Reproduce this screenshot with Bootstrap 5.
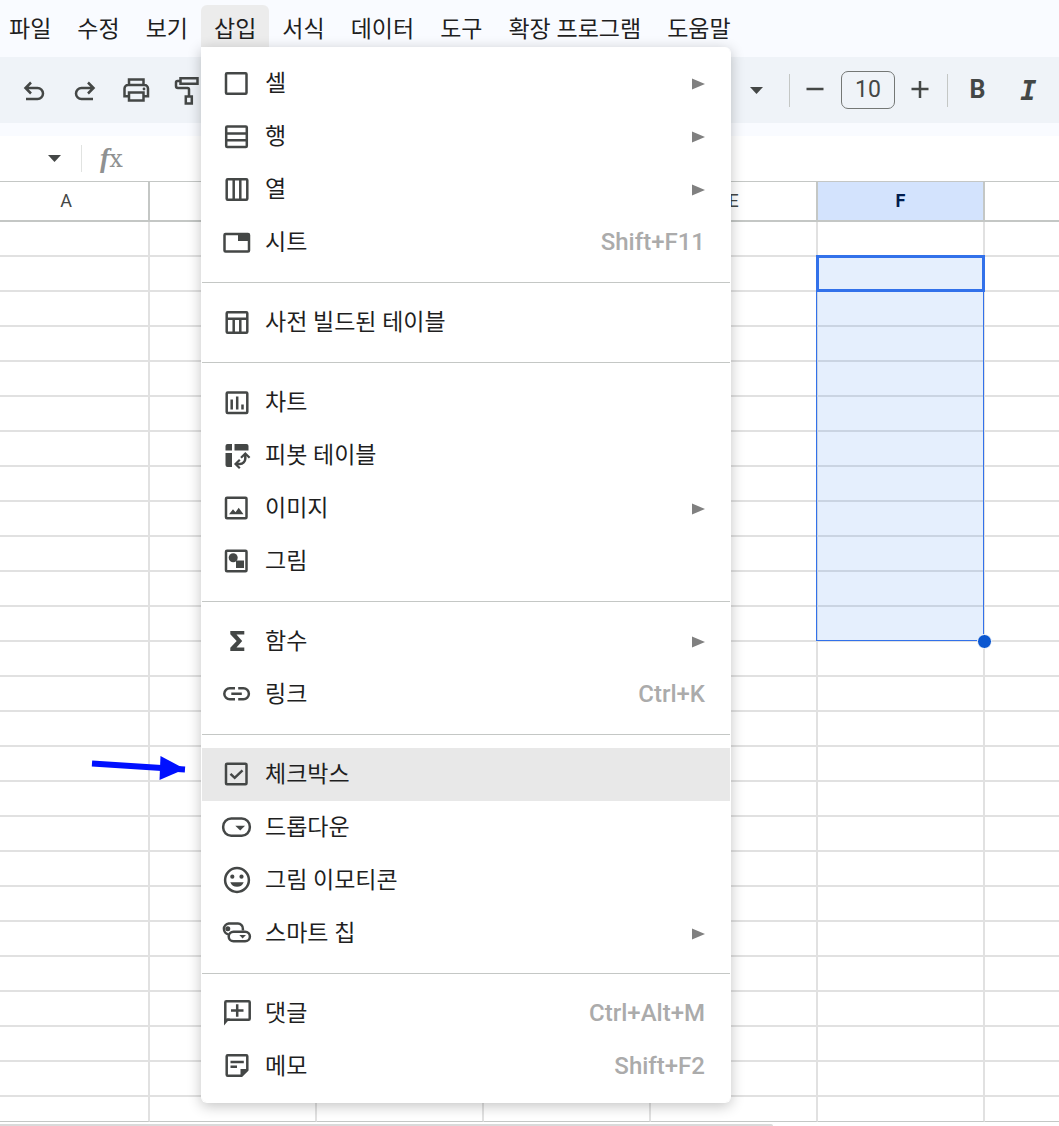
<!DOCTYPE html>
<html lang="ko">
<head>
<meta charset="utf-8">
<meta name="viewport" content="width=device-width, initial-scale=1">
<title>스프레드시트</title>
<link href="https://cdn.jsdelivr.net/npm/bootstrap@5.3.0/dist/css/bootstrap.min.css" rel="stylesheet">
<style>
  :root { --ink: #444746; --line: #c4c7c5; --grid: #e1e1e1; --blue: #3271ea; }
  body { font-family: Roboto, "Noto Sans CJK KR", sans-serif; color: #1f1f1f; background: #fff; overflow-x: hidden; }
  svg { display: block; flex: none; }
  .ico { fill: none; stroke: var(--ink); stroke-width: 2.5; }
  .ico .solid { fill: var(--ink); stroke: none; }

  .menubar { background: #f9fbff; height: 57px; padding-top: 5px; }
  .menubar-list { margin-left: -4px; }
  .menubar-btn { height: 42px; padding: 8px 13px 0; border: 0; background: none; font-size: 23px; line-height: 34px; color: #1f1f1f; white-space: nowrap; border-radius: 6px 6px 0 0; }
  .menubar-btn.active { background: #ececec; }

  .insert-menu { top: 100%; left: 0; width: 530px; padding: 10px 0 9px; margin: 0; border: 1px solid #fff; border-top: 0; border-radius: 0 6px 6px 6px; box-shadow: 0 3px 14px rgba(0,0,0,.24); }
  .insert-menu .dropdown-item { height: 53px; padding: 0 25px 0 19px; font-size: 23px; line-height: 53px; color: #1f1f1f; }
  .insert-menu .dropdown-item.active { background: #e8e8e8; }
  .insert-menu .dropdown-divider { margin: 13px 0; border-top: 1px solid var(--line); opacity: 1; }
  .entry-label { margin-left: 12px; }
  .shortcut { color: #ababab; font-size: 24px; font-weight: 500; }
  .more { fill: #808080; }

  .toolbar { background: #eff3f8; height: 66px; padding-left: 8px; }
  .tools-left { width: 732px; }
  .tool { width: 51px; height: 50px; padding: 0; border: 0; background: none; color: var(--ink); display: flex; align-items: center; justify-content: center; flex: none; }
  .tool-sm { width: 33px; }
  .rule { width: 1px; height: 33px; background: var(--line); flex: none; }
  .rule-end { margin: 0 4px 0 11px; }
  .size-box { width: 54px; height: 38px; margin: 0 8px 0 10px; border: 1px solid #747775; border-radius: 7px; background: none; font-size: 23px; line-height: 34px; color: var(--ink); text-align: center; padding: 0 0 2px; }
  .glyph-b { font-size: 25px; font-weight: 700; }
  .glyph-i { font: italic 700 27px "DejaVu Sans Mono", monospace; }

  .formula-bar { border-top: 13px solid #f9fbff; height: 58px; }
  .name-arrow { width: 81px; height: 44px; padding: 0 20px 0 0; border: 0; background: none; display: flex; justify-content: flex-end; align-items: center; }
  .rule-pale { height: 27px; background: #e1e3e1; }
  .fx-mark { margin-left: 18px; font: 24px/44px "DejaVu Serif", serif; color: #8f9191; }
  .fx-mark i { font-family: "Liberation Serif", serif; font-size: 28px; font-weight: 700; }

  .sheet { table-layout: fixed; width: 100%; border-collapse: separate; border-spacing: 0; border-top: 1px solid var(--line); }
  .sheet th { height: 40px; padding: 0; border-right: 2px solid var(--line); border-bottom: 2px solid var(--line); font-size: 18px; font-weight: 400; line-height: 38px; text-align: center; color: var(--ink); }
  .sheet th:first-child { padding-right: 16px; }
  .sheet th.picked { background: #d3e3fd; color: #001d4f; font-weight: 700; }
  .sheet td { height: 35px; padding: 0; border-right: 2px solid var(--grid); border-bottom: 2px solid var(--grid); }
  .sheet tr > :last-child { border-right: 0; }
  .sheet tr.cut td { height: 25px; border-bottom: 1px solid var(--line); }
  .col-first { width: 150px; }
  .col-std { width: 167px; }

  .anchor-cell { position: relative; }
  .range { position: absolute; top: -2px; left: -2px; right: -1px; height: 386px; border: 1px solid var(--blue); background: rgba(14,101,235,.105); }
  .active-cell { position: absolute; top: -1px; left: -1px; right: -2px; height: 37px; border: 3px solid var(--blue); }
  .handle { position: absolute; right: -9px; bottom: -9px; width: 15px; height: 15px; border: 1px solid #fff; border-radius: 50%; background: #0b57d0; }

  .scroll-track { height: 4px; padding-top: 2px; overflow: hidden; }
  .scroll-thumb { width: 73%; height: 2px; background: #dadada; border-radius: 0 2px 0 0; }
  .pointer-note { position: absolute; left: 88px; top: 752px; z-index: 1100; pointer-events: none; }
</style>
<script src="https://cdn.jsdelivr.net/npm/bootstrap@5.3.0/dist/js/bootstrap.bundle.min.js"></script>
</head>
<body>
<nav class="menubar">
  <ul class="menubar-list list-unstyled d-flex mb-0">
    <li><button type="button" class="menubar-btn">파일</button></li>
    <li><button type="button" class="menubar-btn">수정</button></li>
    <li><button type="button" class="menubar-btn">보기</button></li>
    <li class="dropdown">
      <button type="button" class="menubar-btn active" aria-expanded="true">삽입</button>
      <ul class="dropdown-menu insert-menu show">
        <li><a href="#" class="dropdown-item d-flex align-items-center">
          <svg class="ico" width="32" height="33"><rect x="5" y="6.2" width="20.5" height="20.6" rx="1"/></svg>
          <span class="entry-label">셀</span>
          <svg class="more ms-auto" width="13" height="12"><path d="M0 .5 13 6 0 11.500z"/></svg></a></li>
        <li><a href="#" class="dropdown-item d-flex align-items-center">
          <svg class="ico" width="32" height="33"><path d="M6.200 6.500h18.600a1 1 0 0 1 1 1v18.600a1 1 0 0 1-1 1H6.200a1 1 0 0 1-1-1V7.500a1 1 0 0 1 1-1zM5.200 13.500h20.600M5.200 20.300h20.600"/></svg>
          <span class="entry-label">행</span>
          <svg class="more ms-auto" width="13" height="12"><path d="M0 .5 13 6 0 11.500z"/></svg></a></li>
        <li><a href="#" class="dropdown-item d-flex align-items-center">
          <svg class="ico" width="32" height="33"><rect x="5.700" y="6.200" width="20.600" height="20.600" rx="1"/><path d="M12.700 6v21M19.300 6v21"/></svg>
          <span class="entry-label">열</span>
          <svg class="more ms-auto" width="13" height="12"><path d="M0 .5 13 6 0 11.500z"/></svg></a></li>
        <li><a href="#" class="dropdown-item d-flex align-items-center">
          <svg class="ico" width="32" height="33"><rect x="3.500" y="8" width="24.500" height="17.500" rx="1"/><path class="solid" d="M17 7h11v8H17z"/></svg>
          <span class="entry-label">시트</span><span class="shortcut ms-auto">Shift+F11</span></a></li>
        <li><hr class="dropdown-divider"></li>
        <li><a href="#" class="dropdown-item d-flex align-items-center">
          <svg class="ico" width="32" height="33"><rect x="5.700" y="6.200" width="20.600" height="20.600" rx="1"/><path d="M5.700 12.800h20.600M12.700 13v14M19.300 13v14"/></svg>
          <span class="entry-label">사전 빌드된 테이블</span></a></li>
        <li><hr class="dropdown-divider"></li>
        <li><a href="#" class="dropdown-item d-flex align-items-center">
          <svg class="ico" width="32" height="33"><rect x="5.700" y="6.500" width="20.600" height="20.600" rx="1"/><path d="M10.700 13.500v10M16.200 10.500v13M21.500 18.500v5"/></svg>
          <span class="entry-label">차트</span></a></li>
        <li><a href="#" class="dropdown-item d-flex align-items-center">
          <svg class="ico" width="32" height="33"><path class="solid" d="M6.500 5H11v6.500H4.500V7a2 2 0 0 1 2-2zM13.500 5h12a2 2 0 0 1 2 2v4.500h-14zM4.500 14H11v14H6.500a2 2 0 0 1-2-2z"/><path d="M24.300 15v4.500a5.500 5.500 0 0 1-5.500 5.500H15"/><path d="M20 18.800 24.300 14.500l4.300 4.300M18.800 20.700 14.500 25l4.300 4.300" stroke-width="2.200"/></svg>
          <span class="entry-label">피봇 테이블</span></a></li>
        <li><a href="#" class="dropdown-item d-flex align-items-center">
          <svg class="ico" width="32" height="33"><rect x="5" y="5.700" width="20.500" height="20.600" rx="1"/><path class="solid" d="m8 22.300 4-5 2.500 3 3.200-4.500 4.800 6.500z"/></svg>
          <span class="entry-label">이미지</span>
          <svg class="more ms-auto" width="13" height="12"><path d="M0 .5 13 6 0 11.500z"/></svg></a></li>
        <li><a href="#" class="dropdown-item d-flex align-items-center">
          <svg class="ico" width="32" height="33"><rect x="5" y="5.700" width="20.500" height="20.600" rx="1"/><circle class="solid" cx="12.200" cy="12.700" r="4.500"/><path class="solid" d="M15 15.500h8V23h-8z"/></svg>
          <span class="entry-label">그림</span></a></li>
        <li><hr class="dropdown-divider"></li>
        <li><a href="#" class="dropdown-item d-flex align-items-center">
          <svg class="ico" width="32" height="33"><path class="solid" d="M9.300 6h14v3.600h-7.800l5.700 6.400-5.700 6.400h7.800V26h-14v-3.200l6.400-6.800-6.400-6.800z"/></svg>
          <span class="entry-label">함수</span>
          <svg class="more ms-auto" width="13" height="12"><path d="M0 .5 13 6 0 11.500z"/></svg></a></li>
        <li><a href="#" class="dropdown-item d-flex align-items-center">
          <svg class="ico" width="32" height="33"><path d="M14 10.200H8.800a5.500 5.500 0 0 0 0 11H14M17.200 10.200h5.200a5.500 5.500 0 0 1 0 11h-5.200M10.300 15.700h10.500"/></svg>
          <span class="entry-label">링크</span><span class="shortcut ms-auto">Ctrl+K</span></a></li>
        <li><hr class="dropdown-divider"></li>
        <li><a href="#" class="dropdown-item active d-flex align-items-center">
          <svg class="ico" width="32" height="33"><rect x="5" y="5.700" width="20.500" height="20.600" rx="1"/><path d="m9.500 15.800 4.200 4 7.800-7.500"/></svg>
          <span class="entry-label">체크박스</span></a></li>
        <li><a href="#" class="dropdown-item d-flex align-items-center">
          <svg class="ico" width="32" height="33"><rect x="2.200" y="7.500" width="26.600" height="17.200" rx="8"/><path class="solid" d="M14.300 14.700h9.800l-4.900 4.800z"/></svg>
          <span class="entry-label">드롭다운</span></a></li>
        <li><a href="#" class="dropdown-item d-flex align-items-center">
          <svg class="ico" width="32" height="33"><circle cx="16" cy="16" r="11.900"/><g class="solid"><circle cx="11.300" cy="12.700" r="2.100"/><circle cx="20.500" cy="12.700" r="2.100"/><path d="M9.300 18.300h13.400a7.200 7.200 0 0 1-13.400 0z"/></g></svg>
          <span class="entry-label">그림 이모티콘</span></a></li>
        <li><a href="#" class="dropdown-item d-flex align-items-center">
          <svg class="ico" width="32" height="33"><path d="M7.500 17.300a5.400 5.400 0 0 1 .2-10.700h9a5 5 0 0 1 5.200 5.400v1.500"/><rect x="7.700" y="14.700" width="21.200" height="9.600" rx="4.800"/><circle class="solid" cx="6.800" cy="11.700" r="2.500"/><path class="solid" d="M18.300 18h6.700l-3.400 3.400z"/></svg>
          <span class="entry-label">스마트 칩</span>
          <svg class="more ms-auto" width="13" height="12"><path d="M0 .5 13 6 0 11.500z"/></svg></a></li>
        <li><hr class="dropdown-divider"></li>
        <li><a href="#" class="dropdown-item d-flex align-items-center">
          <svg class="ico" width="32" height="33"><path d="M4.300 25V5.300a1 1 0 0 1 1-1h22.400a1 1 0 0 1 1 1v16.500a1 1 0 0 1-1 1H6"/><path class="solid" d="M3 21.500h6L3 28.500z"/><path d="M10 13.500h12.500M16.200 7.300v12.500"/></svg>
          <span class="entry-label">댓글</span><span class="shortcut ms-auto">Ctrl+Alt+M</span></a></li>
        <li><a href="#" class="dropdown-item d-flex align-items-center">
          <svg class="ico" width="32" height="33"><path d="M20.500 25.800H6.700a1 1 0 0 1-1-1V6.300a1 1 0 0 1 1-1h18.600a1 1 0 0 1 1 1V20z"/><path class="solid" d="M19.500 19h7v2l-5.500 5.500h-1.500z"/><path d="M9.500 12h13.300M9.500 16.800H16"/></svg>
          <span class="entry-label">메모</span><span class="shortcut ms-auto">Shift+F2</span></a></li>
      </ul>
    </li>
    <li><button type="button" class="menubar-btn">서식</button></li>
    <li><button type="button" class="menubar-btn">데이터</button></li>
    <li><button type="button" class="menubar-btn">도구</button></li>
    <li><button type="button" class="menubar-btn">확장 프로그램</button></li>
    <li><button type="button" class="menubar-btn">도움말</button></li>
  </ul>
</nav>

<div class="toolbar d-flex align-items-center" role="toolbar">
  <div class="tools-left d-flex flex-shrink-0">
    <button type="button" class="tool" aria-label="실행취소"><svg class="ico" width="32" height="32"><path d="M8 25h11.500a5.500 5.500 0 0 0 0-11H7.500M13 8.500 7.500 14l5.500 5.500"/></svg></button>
    <button type="button" class="tool" aria-label="재실행"><svg class="ico" width="32" height="32"><path d="M24 25H12.500a5.500 5.500 0 0 1 0-11h12M19 8.500l5.500 5.500-5.500 5.500"/></svg></button>
    <button type="button" class="tool" aria-label="인쇄"><svg class="ico" width="32" height="32"><path d="M9 10.500V5.500h14.500v5M9 22.200H4.500V14.500a3.500 3.500 0 0 1 3.500-3.500h16.500a3.500 3.500 0 0 1 3.500 3.500v7.700h-4.500M9 18.500h14.500v8H9z"/><circle class="solid" cx="24" cy="15" r="1.400"/></svg></button>
    <button type="button" class="tool" aria-label="서식 복사"><svg class="ico" width="32" height="32"><path d="M9.500 4.200h17v5.600h-17zM9.500 7H6.500a1.500 1.500 0 0 0-1.500 1.500v3.500a2 2 0 0 0 2 2h9.500a1.500 1.500 0 0 1 1.500 1.500v6M14.800 22.500h6v7h-6z"/></svg></button>
  </div>
  <button type="button" class="tool tool-sm" aria-label="글꼴"><svg width="13" height="7" fill="#444746"><path d="M0 0h13L6.500 7z"/></svg></button>
  <div class="rule ms-3"></div>
  <button type="button" class="tool tool-sm ms-2" aria-label="글꼴 크기 줄이기"><svg class="ico" width="18" height="18"><path d="M.5 8h17"/></svg></button>
  <input class="size-box" type="text" value="10" aria-label="글꼴 크기">
  <button type="button" class="tool tool-sm" aria-label="글꼴 크기 늘리기"><svg class="ico" width="18" height="18"><path d="M.5 8h17M9 0v17"/></svg></button>
  <div class="rule rule-end"></div>
  <button type="button" class="tool glyph-b" aria-label="굵게">B</button>
  <button type="button" class="tool glyph-i" aria-label="기울임꼴">I</button>
</div>

<div class="formula-bar d-flex align-items-center">
  <button type="button" class="name-arrow" aria-label="이름 상자"><svg width="13" height="7" fill="#444746"><path d="M0 0h13L6.500 7z"/></svg></button>
  <div class="rule rule-pale"></div>
  <div class="fx-mark"><i>f</i>x</div>
</div>

<table class="sheet">
  <colgroup><col class="col-first"><col class="col-std"><col class="col-std"><col class="col-std"><col class="col-std"><col class="col-std"><col></colgroup>
  <thead><tr><th>A</th><th>B</th><th>C</th><th>D</th><th>E</th><th class="picked">F</th><th></th></tr></thead>
  <tbody id="cells"></tbody>
</table>
<div class="scroll-track"><div class="scroll-thumb"></div></div>

<svg class="pointer-note" width="100" height="32"><path d="M4 11.500 97 17.500" stroke="#0010ff" stroke-width="6"/><path d="M72.500 4 97 17 71.500 28z" fill="#0010ff"/></svg>

<script>
  // 25 full rows plus the one cut off by the scroll bar; the selection starts in F2
  const body = document.getElementById('cells');
  for (let r = 1; r <= 26; r++) {
    const row = body.insertRow();
    if (r === 26) row.className = 'cut';
    for (let c = 0; c < 7; c++) {
      const cell = row.insertCell();
      if (r === 2 && c === 5) {
        cell.className = 'anchor-cell';
        cell.innerHTML = '<div class="range"><div class="active-cell"></div><div class="handle"></div></div>';
      }
    }
  }
</script>
</body>
</html>
